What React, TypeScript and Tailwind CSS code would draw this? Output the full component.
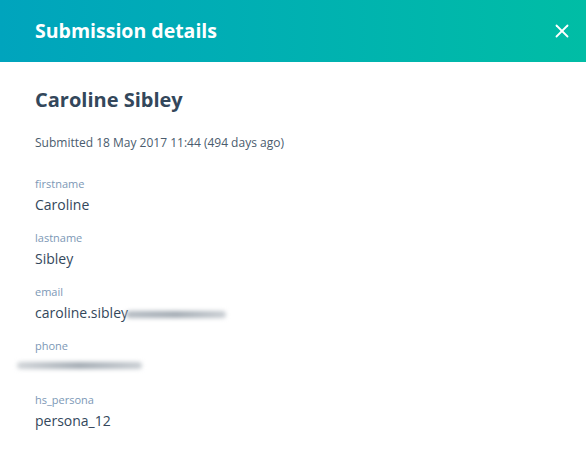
import { X } from 'lucide-react';

const fields = [
  { label: 'firstname', value: 'Caroline' },
  { label: 'lastname', value: 'Sibley' },
];

export default function App() {
  return (
    <div className="h-[453px] w-[586px] overflow-hidden bg-white font-['Open_Sans',sans-serif] text-[#33475b]">
      {/* Header */}
      <div className="flex h-[62px] items-center justify-between bg-gradient-to-r from-[#00a4bd] to-[#00bda5] pl-[35px] pr-[13px]">
        <h1 className="text-[19.5px] font-bold text-white">Submission details</h1>
        <X className="h-[22px] w-[22px] text-white" strokeWidth={2} />
      </div>

      <div className="px-[35px] pt-[26px]">
        <h2 className="text-[20px] font-bold leading-[24px]">Caroline Sibley</h2>
        <p className="mt-[24px] text-[12px] leading-[14px] text-[#4a5c6e]">
          Submitted 18 May 2017 11:44 (494 days ago)
        </p>

        <div className="mt-[27px] flex flex-col gap-[16px]">
          {fields.map((f) => (
            <div key={f.label}>
              <div className="text-[11px] leading-[14px] text-[#7c98b6]">{f.label}</div>
              <div className="mt-[4px] text-[14px] leading-[20px]">{f.value}</div>
            </div>
          ))}
          <div>
            <div className="text-[11px] leading-[14px] text-[#7c98b6]">email</div>
            <div className="mt-[4px] flex items-center text-[14px] leading-[20px]">
              caroline.sibley
              <span className="-ml-[2px] mt-[2px] h-[7px] w-[100px] rounded-full bg-gradient-to-r from-[#b5bcc3] via-[#a3abb3] to-[#c9ced3] blur-[2px]" />
            </div>
          </div>
          <div>
            <div className="text-[11px] leading-[14px] text-[#7c98b6]">phone</div>
            <div className="mt-[4px] flex h-[20px] items-start">
              <span className="-ml-[18px] mt-[5px] h-[7px] w-[125px] rounded-full bg-gradient-to-r from-[#d0d4d8] via-[#a3abb3] to-[#c9ced3] blur-[2px]" />
            </div>
          </div>
          <div>
            <div className="text-[11px] leading-[14px] text-[#7c98b6]">hs_persona</div>
            <div className="mt-[4px] text-[14px] leading-[20px]">persona_12</div>
          </div>
        </div>
      </div>
    </div>
  );
}
